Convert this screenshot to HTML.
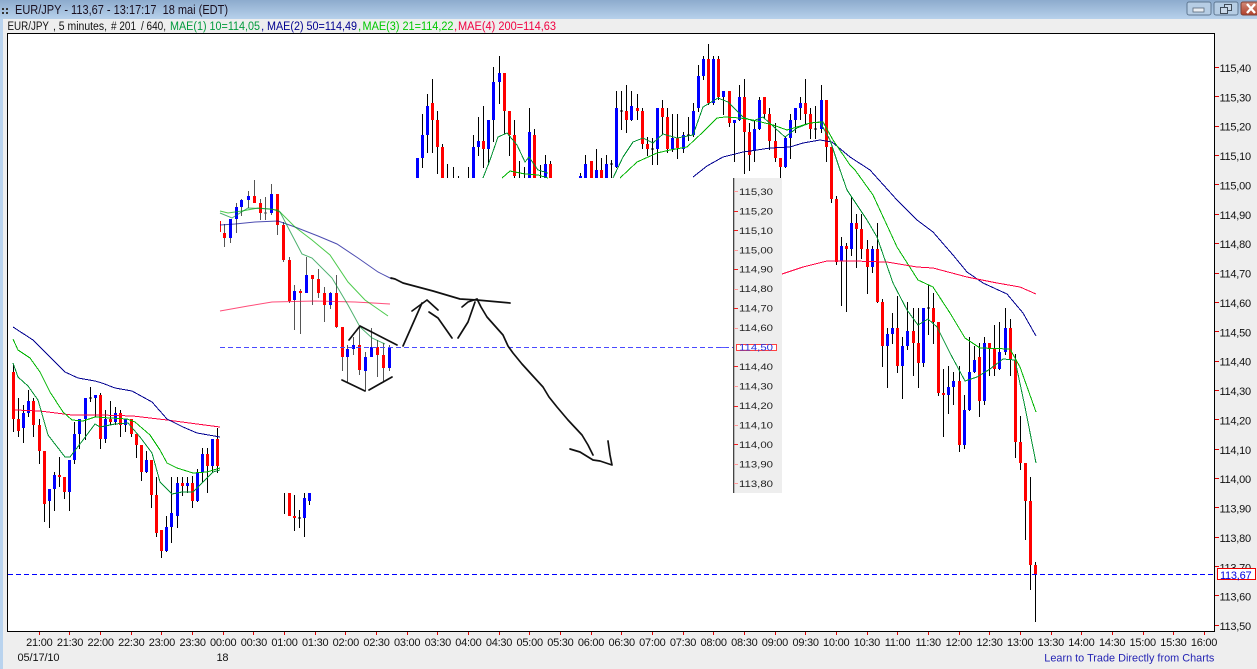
<!DOCTYPE html>
<html><head><meta charset="utf-8"><title>EUR/JPY</title>
<style>
html,body{margin:0;padding:0;background:#eee;width:1257px;height:669px;overflow:hidden}
svg{display:block}
text{font-family:"Liberation Sans",sans-serif;fill:#111}
.ax{font-size:11px;letter-spacing:-.25px}
.pn{font-size:8.8px;fill:#222}
.hd{font-size:11.5px}
.ma{fill:none;stroke-width:1;shape-rendering:crispEdges}
.mb{fill:none;stroke-width:1;opacity:.7}
.hand{fill:none;stroke:#111;stroke-width:1.7;stroke-linejoin:round;stroke-linecap:round}
</style></head><body>
<svg width="1257" height="669" viewBox="0 0 1257 669" xmlns="http://www.w3.org/2000/svg">
<defs><linearGradient id="tb" x1="0" y1="0" x2="0" y2="1"><stop offset="0" stop-color="#8dabcd"/><stop offset="1" stop-color="#b7d1eb"/></linearGradient>
<linearGradient id="cl" x1="0" y1="0" x2="0" y2="1"><stop offset="0" stop-color="#d28a78"/><stop offset="1" stop-color="#b0412c"/></linearGradient></defs>
<rect width="1257" height="669" fill="#eeeeee"/>
<rect width="1257" height="19" fill="url(#tb)"/>
<rect x="0" y="19" width="3" height="650" fill="#b9d3ee"/>
<path d="M2 8h2v2H2zM2 12h2v2H2zM6 8h2v2H6zM6 12h2v2H6z" fill="#333"/>
<text x="15" y="14" font-size="13" textLength="213" lengthAdjust="spacingAndGlyphs" xml:space="preserve" style="fill:#1a1020">EUR/JPY - 113,67 - 13:17:17  18 mai (EDT)</text>
<!-- window buttons -->
<rect x="1187" y="2" width="24" height="13" rx="2" fill="#b6cde4" stroke="#5f7892"/>
<rect x="1193" y="8" width="11" height="4" fill="#e8edf2" stroke="#59697a" stroke-width=".8"/>
<rect x="1214" y="2" width="24" height="13" rx="2" fill="#b6cde4" stroke="#5f7892"/>
<rect x="1224.5" y="4.5" width="7" height="6" fill="#c9d8e8" stroke="#3e4a58"/>
<rect x="1220.5" y="7.5" width="7" height="6" fill="#c9d8e8" stroke="#3e4a58"/>
<rect x="1241" y="2" width="18" height="13" rx="2" fill="url(#cl)" stroke="#7d4238"/>
<path d="M1247 4l8 9M1255 4l-8 9" stroke="#fff" stroke-width="2.4" fill="none"/>
<!-- header -->
<text class="hd" x="7.5" y="30" textLength="41.5" lengthAdjust="spacingAndGlyphs">EUR/JPY</text>
<text class="hd" x="53" y="30" textLength="54" lengthAdjust="spacingAndGlyphs">, 5 minutes,</text>
<text class="hd" x="111" y="30" textLength="25" lengthAdjust="spacingAndGlyphs">#&#160;201</text>
<text class="hd" x="141" y="30" textLength="25" lengthAdjust="spacingAndGlyphs">/ 640,</text>
<text class="hd" x="170" y="30" textLength="90" lengthAdjust="spacingAndGlyphs" style="fill:#009a3c">MAE(1) 10=114,05</text>
<text class="hd" x="261" y="30" style="fill:#000090">,</text>
<text class="hd" x="267" y="30" textLength="90" lengthAdjust="spacingAndGlyphs" style="fill:#000090">MAE(2) 50=114,49</text>
<text class="hd" x="358" y="30" style="fill:#00c000">,</text>
<text class="hd" x="362.5" y="30" textLength="91" lengthAdjust="spacingAndGlyphs" style="fill:#00c800">MAE(3) 21=114,22</text>
<text class="hd" x="454" y="30" style="fill:#f00040">,</text>
<text class="hd" x="458" y="30" textLength="98" lengthAdjust="spacingAndGlyphs" style="fill:#f00040">MAE(4) 200=114,63</text>
<!-- frame -->
<rect x="7.5" y="33.5" width="1207" height="598" fill="#fff" stroke="#000"/>
<!-- candles -->
<g shape-rendering="crispEdges" fill="none">
<path stroke="#000" d="M13.5 365V432M18.5 398V437M23.5 405V443M28.5 390V417M33.5 398V437M39.5 419V464M44.5 451V522M49.5 489V528M54.5 472V511M59.5 457V487M64.5 477V499M69.5 460V511M74.5 422V464M79.5 419V449M85.5 398V440M90.5 387V402M89 398H92M95.5 395V417M100.5 393V449M105.5 410V443M110.5 401V425M115.5 407V425M120.5 410V437M125.5 419V432M131.5 419V437M136.5 434V458M141.5 445V481M146.5 451V473M151.5 460V508M156.5 477V537M161.5 530V558M166.5 516V552M171.5 477V543M177.5 477V528M182.5 477V496M187.5 477V493M192.5 476V508M197.5 469V502M202.5 448V483M207.5 448V493M212.5 439V473M217.5 428V473
M284.5 493V514M289.5 493V516M294.5 495V531M299.5 510V528M298 518H301M304.5 493V537M309.5 493V505
M417.5 158V178M422.5 114V168M427.5 94V153M432.5 79V153M437.5 111V174M442.5 144V178M447.5 164V178M453.5 167V178M458.5 176V178M468.5 167V178M473.5 135V178M478.5 117V156M483.5 106V168M488.5 120V165M493.5 67V142M499.5 56V104M504.5 73V134M509.5 111V156M514.5 120V178M519.5 161V178M524.5 167V178M529.5 108V178M534.5 129V178M540.5 165V178M545.5 155V178M550.5 161V178
M580.5 173V178M585.5 155V178M591.5 161V178M596.5 149V178M601.5 158V178M606.5 155V178M611.5 160V178M610 164H613M616.5 91V168M621.5 91V130M620 111H623M626.5 85V133M631.5 91V121M637.5 94V120M642.5 108V149M647.5 137V156M652.5 138V165M651 149H654M657.5 108V165M662.5 100V135M667.5 108V153M672.5 114V152M677.5 114V159M683.5 132V153M688.5 117V141M687 135H690M693.5 103V137M698.5 65V112M703.5 56V80M708.5 44V105M713.5 56V105M718.5 56V100M723.5 91V115M729.5 91V127M734.5 120V162M739.5 85V121M744.5 79V174M749.5 123V171M754.5 120V162M759.5 97V130M764.5 97V118M769.5 108V150M775.5 123V162M780.5 158V178M785.5 136V168M790.5 114V159M795.5 108V133M800.5 97V120M805.5 79V124M810.5 108V139M815.5 106V139M814 129H817M821.5 85V133M826.5 100V162M831.5 147V203M836.5 196V265
M841.5 237V306M846.5 243V312M851.5 196V256M856.5 214V268M861.5 214V259M867.5 240V294M872.5 246V273M877.5 223V303M882.5 299V367M887.5 328V388M892.5 313V344M897.5 296V373M902.5 337V399M907.5 302V350M913.5 308V376M918.5 308V388M923.5 308V367M928.5 285V335M927 308H930M933.5 293V344M938.5 322V396M943.5 369V437M948.5 366V414M953.5 372V405M959.5 366V452M964.5 395V449M969.5 337V411M974.5 346V373M979.5 343V417M984.5 337V405M989.5 343V376M994.5 325V376M999.5 322V370M1005.5 308V355M1010.5 319V376M1015.5 354V458M1020.5 416V470M1025.5 463V540M1030.5 477V590M1035.5 562V622"/>
<path stroke="#555" d="M224.5 224V247M230.5 219V243M236.5 203V233M241.5 199V216M248.5 191V208M254.5 180V203M260.5 199V220M265.5 197V220M264 213H267M271.5 184V215M277.5 194V235M283.5 222V262M289.5 257V303M294.5 285V330M300.5 289V334M306.5 257V293M312.5 275V305M318.5 269V298M324.5 287V322M330.5 292V309M336.5 275V328M342.5 327V371M347.5 345V382M353.5 337V355M359.5 327V375M365.5 352V391M371.5 328V357M377.5 340V377M383.5 343V382M389.5 345V371"/>
<path stroke="#0000ff" stroke-width="3" d="M23.5 413V428M28.5 401V413M49.5 489V501M54.5 475V489M69.5 460V492M74.5 434V460M79.5 419V434M85.5 398V419M95.5 395V398M105.5 419V439M115.5 413V422M125.5 419V425M146.5 460V472M166.5 527V551M171.5 513V527M177.5 483V516M187.5 483V486M197.5 472V501M202.5 454V472M212.5 439V466
M304.5 498V518M309.5 493V501
M230.5 219V238M236.5 207V219M241.5 200V207M248.5 196V200M271.5 194V213M294.5 291V300M306.5 275V293M330.5 293V305M347.5 349V357M353.5 345V349M365.5 357V371M371.5 347V357M389.5 347V368
M417.5 158V178M422.5 135V158M427.5 106V135M473.5 147V178M478.5 141V147M488.5 120V149M493.5 82V120M499.5 73V82M529.5 132V178M545.5 164V178
M580.5 176V178M585.5 164V178M596.5 170V178M606.5 164V178M616.5 108V167M631.5 106V120M657.5 108V149M672.5 138V149M683.5 135V149M693.5 111V135M698.5 76V108M703.5 59V76M713.5 59V103M723.5 91V97M734.5 120V123M739.5 97V120M754.5 129V151M759.5 100V129M785.5 138V167M790.5 120V138M795.5 108V120M800.5 103V108M821.5 100V129
M841.5 246V261M851.5 223V249M872.5 249V267M887.5 334V346M892.5 328V334M902.5 346V366M907.5 331V346M923.5 308V363M948.5 387V395M953.5 381V387M964.5 410V445M969.5 372V410M974.5 360V372M984.5 343V401M999.5 352V369M1005.5 328V352"/>
<path stroke="#ff0000" stroke-width="3" d="M13.5 372V419M18.5 419V431M33.5 401V425M39.5 425V451M44.5 451V504M59.5 475V477M64.5 477V492M100.5 395V439M110.5 419V422M120.5 413V425M131.5 419V434M136.5 434V445M141.5 445V472M151.5 460V495M156.5 495V533M161.5 530V551M182.5 483V486M192.5 483V501M207.5 454V466M217.5 439V466
M289.5 493V516M294.5 516V518
M224.5 233V238M254.5 196V203M260.5 203V213M277.5 194V225M283.5 225V260M289.5 260V301M300.5 291V293M312.5 275V279M318.5 279V293M324.5 293V305M336.5 293V327M342.5 327V357M359.5 345V370M377.5 347V355M383.5 355V368
M432.5 103V120M437.5 120V147M442.5 147V178M483.5 141V149M504.5 73V111M509.5 111V135M514.5 135V176M534.5 135V178M550.5 164V178
M591.5 161V178M601.5 170V178M626.5 111V120M637.5 108V111M642.5 111V144M647.5 144V149M662.5 108V117M667.5 117V149M677.5 138V148M708.5 59V103M718.5 59V97M729.5 91V123M744.5 97V132M749.5 132V155M764.5 97V114M769.5 114V141M775.5 141V158M780.5 158V167M805.5 103V114M810.5 114V129M826.5 100V147M831.5 147V199M836.5 199V262
M846.5 246V249M856.5 223V229M861.5 229V249M867.5 249V267M877.5 249V302M882.5 302V346M897.5 328V366M913.5 331V343M918.5 343V363M933.5 308V322M938.5 322V393M943.5 393V395M959.5 381V445M979.5 357V401M989.5 343V349M994.5 349V369M1010.5 328V360M1015.5 360V442M1020.5 442V463M1025.5 463V501M1030.5 501V565M1035.5 565V574"/>
<path stroke="#ff0000" d="M220.5 221V232"/>
</g>
<!-- moving averages left -->
<polyline class="ma" stroke="#ff0040" points="15,410 40,411 72,415 100,415 133,416 167,420 197,424 220,427"/>
<polyline class="ma" stroke="#000090" points="13,327 33,340 43,350 65,372 78,378 95,381 102,383 115,388 132,391 152,402 167,419 183,427 197,433 220,437"/>
<polyline class="ma" stroke="#00b400" points="13,339 18,350 30,358 40,372 50,392 63,412 72,420 83,421 95,417 110,418 127,419 135,422 150,435 160,450 167,463 177,468 193,473 207,472 220,468"/>
<polyline class="ma" stroke="#009030" points="13,363 18,377 28,386 38,400 48,435 65,457 70,457 83,440 95,424 100,427 115,424 128,423 140,437 152,453 160,482 172,494 182,492 193,492 207,478 213,472 220,470"/>
<!-- cluster A MAs -->
<polyline class="mb" stroke="#ff0040" points="220,311 248,306 272,302 315,301 355,302 390,304"/>
<polyline class="mb" stroke="#000090" points="220,225 235,224 255,222 278,221 295,227 318,236 337,244 358,258 378,272 392,279"/>
<polyline class="mb" stroke="#00b400" points="220,211 228,213 242,211 258,208 278,210 295,227 312,240 330,255 348,282 365,300 388,316"/>
<polyline class="mb" stroke="#009030" points="220,213 232,218 248,208 272,209 280,212 292,235 302,254 312,258 332,278 348,305 360,327 372,338 385,344"/>
<!-- cluster B/C MAs -->
<polyline class="ma" stroke="#009030" points="483,178 490,160 498,137 507,133 517,145 525,162 529,157 538,170 548,173"/>
<polyline class="ma" stroke="#00b400" points="502,178 510,171 525,174 538,175 548,178"/>
<polyline class="ma" stroke="#000090" points="693,177 707,166 723,157 743,152 757,150 770,148 790,147 803,143 820,140 832,142 850,157 870,170 897,200 917,220 933,232 953,255 967,272 983,283 1007,294 1023,313 1036,336"/>
<polyline class="ma" stroke="#009030" points="613,178 623,157 633,142 643,138 653,143 663,134 677,138 693,135 703,107 718,98 728,102 743,117 753,121 763,117 775,128 785,137 797,128 810,123 820,122 830,140 840,170 847,190 867,220 877,237 893,283 907,310 918,325 928,319 937,327 950,353 965,381 977,377 990,369 1003,359 1015,360 1025,407 1036,463"/>
<polyline class="ma" stroke="#00b400" points="620,178 637,162 657,153 670,150 687,147 703,132 717,118 725,117 740,118 753,120 773,125 787,130 797,127 810,123 823,122 833,140 850,165 855,170 873,195 897,247 918,280 933,287 950,313 965,338 980,348 1010,349 1020,367 1036,412"/>
<polyline class="ma" stroke="#ff0040" points="782,274 803,267 827,261 853,261 887,262 917,267 933,268 967,277 997,283 1020,287 1036,294"/>
<!-- dashed lines -->
<path d="M220 347.5H733" stroke="#4a4aff" stroke-dasharray="5 3" fill="none" shape-rendering="crispEdges"/>
<path d="M8 574.5H1214" stroke="#0000ff" stroke-dasharray="5 3" fill="none" shape-rendering="crispEdges"/>
<!-- pasted panel -->
<rect x="733" y="178" width="49" height="315" fill="#eee"/>
<rect x="733" y="178" width="1.3" height="315" fill="#444"/>
<path d="M721 347.5H729" stroke="#5a5aff" stroke-dasharray="5 3"/>
<g shape-rendering="crispEdges" fill="none">
<path stroke="#ff9a9a" d="M734 191.5h4M734 250.5h4M734 289.5h4M734 328.5h4M734 386.5h4M734 425.5h4M734 464.5h4M734 483.5h4"/>
<path stroke="#f02020" d="M734 211.5h4M734 230.5h4M734 269.5h4M734 308.5h4M734 366.5h4M734 406.5h4M734 444.5h4"/>
</g>
<g class="pl">
<text class="pn" x="739" y="195" textLength="34" lengthAdjust="spacingAndGlyphs">115,30</text>
<text class="pn" x="739" y="214.5" textLength="34" lengthAdjust="spacingAndGlyphs">115,20</text>
<text class="pn" x="739" y="234" textLength="34" lengthAdjust="spacingAndGlyphs">115,10</text>
<text class="pn" x="739" y="253.5" textLength="34" lengthAdjust="spacingAndGlyphs">115,00</text>
<text class="pn" x="739" y="272.5" textLength="34" lengthAdjust="spacingAndGlyphs">114,90</text>
<text class="pn" x="739" y="292" textLength="34" lengthAdjust="spacingAndGlyphs">114,80</text>
<text class="pn" x="739" y="311.5" textLength="34" lengthAdjust="spacingAndGlyphs">114,70</text>
<text class="pn" x="739" y="331" textLength="34" lengthAdjust="spacingAndGlyphs">114,60</text>
<rect x="736.5" y="344.5" width="40" height="6" fill="#fff" stroke="#ff4040"/>
<text class="pn" x="739" y="350.5" textLength="34" lengthAdjust="spacingAndGlyphs" style="fill:#2030e0">114,50</text>
<text class="pn" x="739" y="370" textLength="34" lengthAdjust="spacingAndGlyphs">114,40</text>
<text class="pn" x="739" y="389.5" textLength="34" lengthAdjust="spacingAndGlyphs">114,30</text>
<text class="pn" x="739" y="409" textLength="34" lengthAdjust="spacingAndGlyphs">114,20</text>
<text class="pn" x="739" y="428.5" textLength="34" lengthAdjust="spacingAndGlyphs">114,10</text>
<text class="pn" x="739" y="448" textLength="34" lengthAdjust="spacingAndGlyphs">114,00</text>
<text class="pn" x="739" y="467.5" textLength="34" lengthAdjust="spacingAndGlyphs">113,90</text>
<text class="pn" x="739" y="487" textLength="34" lengthAdjust="spacingAndGlyphs">113,80</text>
</g>
<!-- hand drawing -->
<polyline class="hand" points="391,278 395,279 403,283 433,291 460,299 477,300 510,303"/>
<polyline class="hand" points="403,346 422,303"/>
<polyline class="hand" points="412,311 427,300 438,310"/>
<polyline class="hand" points="429,312 438,318 445,328 452,338"/>
<polyline class="hand" points="458,338 468,322 475,302"/>
<polyline class="hand" points="462,307 468,302 477,299"/>
<polyline class="hand" points="477,299 481,307 487,317 495,326 503,335 508,346 513,353 522,364 532,375 543,387 549,397 557,407 568,420 582,435 588,445 593,455"/>
<polyline class="hand" points="570,449 580,452 593,460 600,461 612,465 610,455 608,441"/>
<polyline class="hand" points="349,340 360,326 397,345"/>
<polyline class="hand" points="342,380 365,391"/>
<polyline class="hand" points="369,390 392,377"/>
<!-- right axis ticks -->
<path shape-rendering="crispEdges" stroke="#e00000" fill="none" d="M1215 67.5h4M1215 96.5h4M1215 126.5h4M1215 155.5h4M1215 184.5h4M1215 214.5h4M1215 243.5h4M1215 273.5h4M1215 302.5h4M1215 331.5h4M1215 361.5h4M1215 390.5h4M1215 419.5h4M1215 449.5h4M1215 478.5h4M1215 507.5h4M1215 537.5h4M1215 566.5h4M1215 595.5h4M1215 625.5h4"/>
<g class="ax">
<text class="ax" x="1219.5" y="72">115,40</text>
<text class="ax" x="1219.5" y="101.3">115,30</text>
<text class="ax" x="1219.5" y="130.7">115,20</text>
<text class="ax" x="1219.5" y="160">115,10</text>
<text class="ax" x="1219.5" y="189.5">115,00</text>
<text class="ax" x="1219.5" y="218.8">114,90</text>
<text class="ax" x="1219.5" y="248.2">114,80</text>
<text class="ax" x="1219.5" y="277.6">114,70</text>
<text class="ax" x="1219.5" y="307">114,60</text>
<text class="ax" x="1219.5" y="336.3">114,50</text>
<text class="ax" x="1219.5" y="365.7">114,40</text>
<text class="ax" x="1219.5" y="395">114,30</text>
<text class="ax" x="1219.5" y="424.4">114,20</text>
<text class="ax" x="1219.5" y="453.8">114,10</text>
<text class="ax" x="1219.5" y="483.2">114,00</text>
<text class="ax" x="1219.5" y="512.5">113,90</text>
<text class="ax" x="1219.5" y="541.9">113,80</text>
<text class="ax" x="1219.5" y="571.3">113,70</text>
<text class="ax" x="1219.5" y="600.6">113,60</text>
<text class="ax" x="1219.5" y="630">113,50</text>
</g>
<rect x="1217.5" y="568.5" width="38" height="11" fill="#fff" stroke="#f00000"/>
<text class="ax" x="1220" y="579" style="fill:#0000e0">113,67</text>
<!-- x axis ticks -->
<path shape-rendering="crispEdges" stroke="#e00000" fill="none" d="M39.5 632v3M69.5 632v3M100.5 632v3M131.5 632v3M161.5 632v3M192.5 632v3M223.5 632v3M253.5 632v3M284.5 632v3M315.5 632v3M345.5 632v3M376.5 632v3M407.5 632v3M437.5 632v3M468.5 632v3M499.5 632v3M529.5 632v3M560.5 632v3M591.5 632v3M621.5 632v3M652.5 632v3M683.5 632v3M713.5 632v3M744.5 632v3M775.5 632v3M805.5 632v3M836.5 632v3M867.5 632v3M897.5 632v3M928.5 632v3M959.5 632v3M989.5 632v3M1020.5 632v3M1051.5 632v3M1081.5 632v3M1112.5 632v3M1143.5 632v3M1173.5 632v3M1204.5 632v3"/>
<g text-anchor="middle">
<text class="ax" x="39.3" y="646">21:00</text><text class="ax" x="70" y="646">21:30</text><text class="ax" x="100.6" y="646">22:00</text><text class="ax" x="131.3" y="646">22:30</text><text class="ax" x="161.9" y="646">23:00</text><text class="ax" x="192.6" y="646">23:30</text><text class="ax" x="223.2" y="646">00:00</text><text class="ax" x="253.9" y="646">00:30</text><text class="ax" x="284.5" y="646">01:00</text><text class="ax" x="315.2" y="646">01:30</text><text class="ax" x="345.8" y="646">02:00</text><text class="ax" x="376.5" y="646">02:30</text><text class="ax" x="407.1" y="646">03:00</text><text class="ax" x="437.8" y="646">03:30</text><text class="ax" x="468.4" y="646">04:00</text><text class="ax" x="499" y="646">04:30</text><text class="ax" x="529.7" y="646">05:00</text><text class="ax" x="560.4" y="646">05:30</text><text class="ax" x="591" y="646">06:00</text><text class="ax" x="621.7" y="646">06:30</text><text class="ax" x="652.3" y="646">07:00</text><text class="ax" x="683" y="646">07:30</text><text class="ax" x="713.6" y="646">08:00</text><text class="ax" x="744.3" y="646">08:30</text><text class="ax" x="774.9" y="646">09:00</text><text class="ax" x="805.6" y="646">09:30</text><text class="ax" x="836.2" y="646">10:00</text><text class="ax" x="866.9" y="646">10:30</text><text class="ax" x="897.5" y="646">11:00</text><text class="ax" x="928.2" y="646">11:30</text><text class="ax" x="958.8" y="646">12:00</text><text class="ax" x="989.5" y="646">12:30</text><text class="ax" x="1020.1" y="646">13:00</text><text class="ax" x="1050.8" y="646">13:30</text><text class="ax" x="1081.4" y="646">14:00</text><text class="ax" x="1112.1" y="646">14:30</text><text class="ax" x="1142.7" y="646">15:00</text><text class="ax" x="1173.4" y="646">15:30</text><text class="ax" x="1204" y="646">16:00</text>
</g>
<text class="ax" x="17.5" y="661" textLength="42" style="letter-spacing:0">05/17/10</text>
<text class="ax" x="216.5" y="661">18</text>
<text class="ax" x="1044.3" y="661.5" textLength="170" lengthAdjust="spacingAndGlyphs" style="fill:#2424b4;letter-spacing:0">Learn to Trade Directly from Charts</text>
</svg>
</body></html>
